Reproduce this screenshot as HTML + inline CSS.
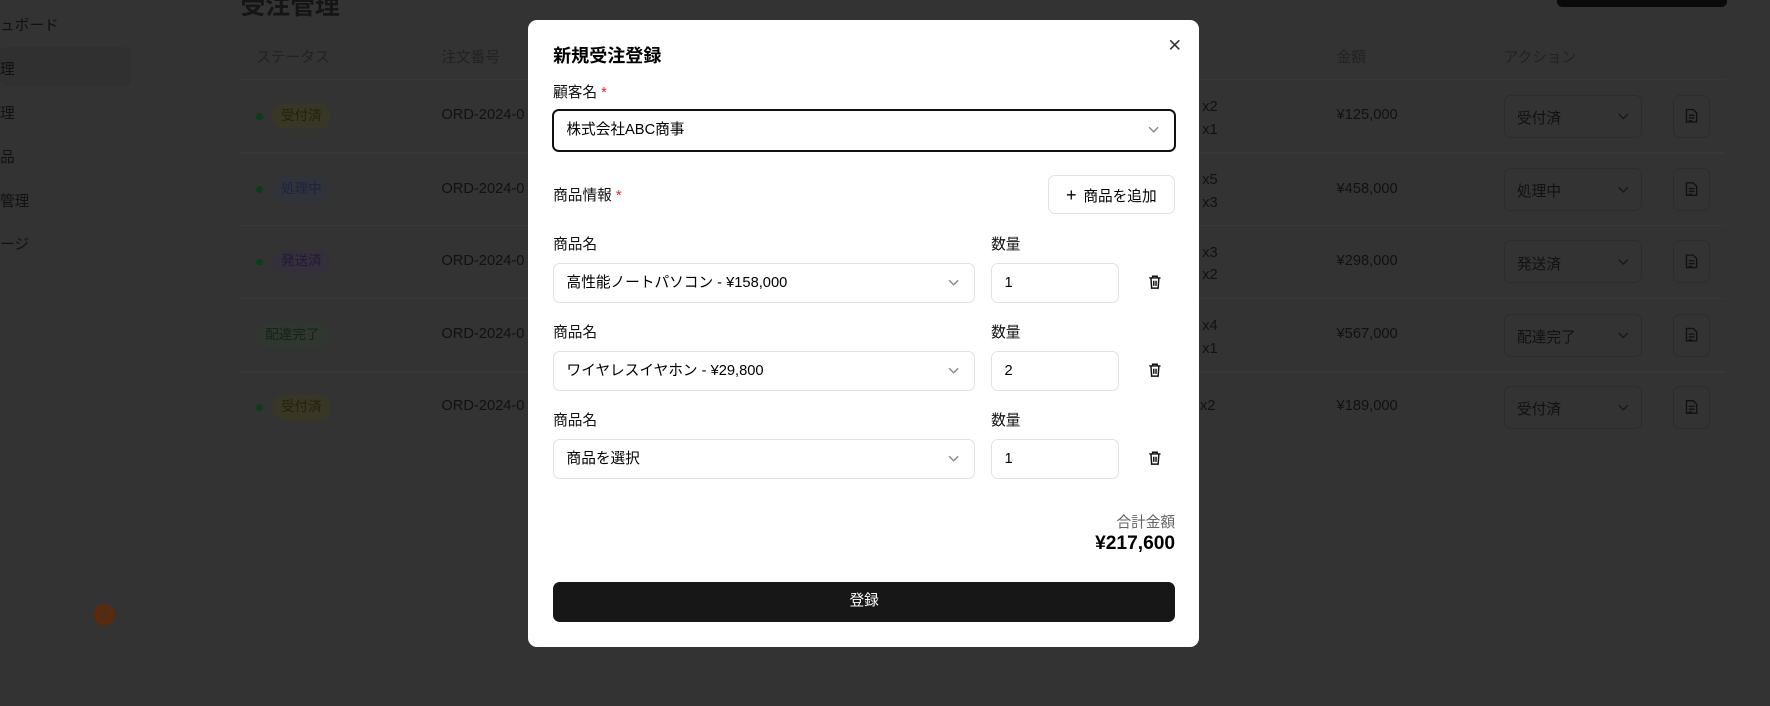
<!DOCTYPE html>
<html><head><meta charset="utf-8"><style>
html{zoom:1.12883}
body{margin:0;width:1568px;height:625px;background:#333;overflow:hidden;position:relative;font-family:"Liberation Sans","Noto Sans CJK JP",sans-serif;font-size:13px;color:#000}
.a{position:absolute;white-space:nowrap}
.dim{color:#111}
.hd{color:#222;font-size:13px}
.line{position:absolute;left:213px;width:1315px;height:1px;background:#383838}
.badge{position:absolute;height:22px;line-height:22px;padding:0 8px;border-radius:11px;font-size:12px}
.dot{position:absolute;width:6px;height:6px;border-radius:3px;background:#0b3d1a}
.asel{position:absolute;left:1332px;width:123px;height:38px;border:1px solid #2c2c2c;border-radius:6px;box-sizing:border-box}
.doc{position:absolute;left:1482px;width:33px;height:38px;border:1px solid #2c2c2c;border-radius:6px;box-sizing:border-box}
.modal{position:absolute;left:468px;top:18px;width:594px;height:555px;background:#fff;border-radius:8px}
.inp{position:absolute;border:1px solid #e2e2e2;border-radius:6px;box-sizing:border-box;background:#fff;font-size:13px;line-height:34px;padding-left:11px}
.lbl{position:absolute;font-size:13px;color:#111}
</style></head><body>
<div class="a" style="left:213px;top:-12px;font-size:22px;font-weight:bold;color:#151515">受注管理</div>
<div class="a" style="left:1379px;top:-10px;width:151px;height:16px;background:#0a0a0a;border-radius:5px"></div>
<div class="a dim" style="left:0;top:12px">ュボード</div>
<div class="a" style="left:0;top:42px;width:116px;height:34px;background:#303030;border-radius:6px"></div>
<div class="a dim" style="left:0;top:51px">理</div>
<div class="a dim" style="left:0;top:90px">理</div>
<div class="a dim" style="left:0;top:129px">品</div>
<div class="a dim" style="left:0;top:168px">管理</div>
<div class="a dim" style="left:0;top:206px">ージ</div>
<div class="a" style="left:83px;top:535px;width:19px;height:19px;border-radius:10px;background:#5a2a0a;color:#333;font-size:11px;text-align:center;line-height:19px">2</div>

<div class="a hd" style="left:227px;top:41px">ステータス</div>
<div class="a hd" style="left:391px;top:41px">注文番号</div>
<div class="a hd" style="left:1184px;top:41px">金額</div>
<div class="a hd" style="left:1332px;top:41px">アクション</div>
<div class="line" style="top:70px"></div><div class="line" style="top:135px"></div><div class="line" style="top:199px"></div><div class="line" style="top:264px"></div><div class="line" style="top:329px"></div>

<div class="dot" style="left:227px;top:100px"></div><div class="badge" style="left:241px;top:92px;background:#383624;color:#262208">受付済</div>
<div class="dot" style="left:227px;top:165px"></div><div class="badge" style="left:241px;top:157px;background:#31333a;color:#1c2440">処理中</div>
<div class="dot" style="left:227px;top:229px"></div><div class="badge" style="left:241px;top:221px;background:#343039;color:#24183a">発送済</div>
<div class="badge" style="left:227px;top:286px;background:#303630;color:#122418">配達完了</div>
<div class="dot" style="left:227px;top:358px"></div><div class="badge" style="left:241px;top:350px;background:#383624;color:#262208">受付済</div>

<div class="a dim" style="left:391px;top:95px">ORD-2024-0</div>
<div class="a dim" style="left:391px;top:160px">ORD-2024-0</div>
<div class="a dim" style="left:391px;top:224px">ORD-2024-0</div>
<div class="a dim" style="left:391px;top:289px">ORD-2024-0</div>
<div class="a dim" style="left:391px;top:353px">ORD-2024-0</div>
<div class="a dim" style="left:1065px;top:85px;line-height:20px">x2<br>x1</div>
<div class="a dim" style="left:1065px;top:150px;line-height:20px">x5<br>x3</div>
<div class="a dim" style="left:1065px;top:214px;line-height:20px">x3<br>x2</div>
<div class="a dim" style="left:1065px;top:279px;line-height:20px">x4<br>x1</div>
<div class="a dim" style="left:1063px;top:353px">x2</div>
<div class="a dim" style="left:1184px;top:95px">¥125,000</div>
<div class="a dim" style="left:1184px;top:160px">¥458,000</div>
<div class="a dim" style="left:1184px;top:224px">¥298,000</div>
<div class="a dim" style="left:1184px;top:289px">¥567,000</div>
<div class="a dim" style="left:1184px;top:353px">¥189,000</div>

<div class="asel" style="top:84px"><span class="a dim" style="left:11px;top:10px">受付済</span></div>
<div class="asel" style="top:149px"><span class="a dim" style="left:11px;top:10px">処理中</span></div>
<div class="asel" style="top:213px"><span class="a dim" style="left:11px;top:10px">発送済</span></div>
<div class="asel" style="top:278px"><span class="a dim" style="left:11px;top:10px">配達完了</span></div>
<div class="asel" style="top:342px"><span class="a dim" style="left:11px;top:10px">受付済</span></div>
<svg class="a" style="left:0;top:0" width="1568" height="625">
<g fill="none" stroke="#181818" stroke-width="1.2">
<path d="M1434 101l4 4 4-4M1434 166l4 4 4-4M1434 230l4 4 4-4M1434 295l4 4 4-4M1434 359l4 4 4-4"/>
<g id="d"><path d="M1494 97h6l3 3v8h-9z M1496 102h5M1496 104.5h5M1496 107h3" stroke="#111"/></g>
<use href="#d" y="65"/><use href="#d" y="129"/><use href="#d" y="194"/><use href="#d" y="258"/>
</g></svg>
<div class="doc" style="top:84px"></div><div class="doc" style="top:149px"></div><div class="doc" style="top:213px"></div><div class="doc" style="top:278px"></div><div class="doc" style="top:342px"></div>

<div class="modal"></div>
<div class="a" style="left:490px;top:37px;font-size:16px;font-weight:bold">新規受注登録</div>
<svg class="a" style="left:1035px;top:34px" width="12" height="12" viewBox="0 0 12 12"><path d="M2 2L10 10M10 2L2 10" stroke="#333" stroke-width="1.4"/></svg>
<div class="lbl" style="left:490px;top:72px">顧客名 <span style="color:#e22">*</span></div>
<div class="inp" style="left:489px;top:97px;width:553px;height:38px;border:2px solid #111;line-height:35px">株式会社ABC商事</div>
<svg class="a" style="left:1017px;top:111px" width="10" height="8"><path d="M1 2l4 4 4-4" fill="none" stroke="#888" stroke-width="1.2"/></svg>
<div class="lbl" style="left:490px;top:163px">商品情報 <span style="color:#e22">*</span></div>
<div class="inp" style="left:928px;top:155px;width:113px;height:35px;padding-left:0;text-align:center"><span style="font-size:16px;margin-right:6px">+</span>商品を追加</div>

<div class="lbl" style="left:490px;top:206px">商品名</div><div class="lbl" style="left:878px;top:206px">数量</div>
<div class="inp" style="left:490px;top:233px;width:374px;height:35px">高性能ノートパソコン - ¥158,000</div>
<div class="inp" style="left:878px;top:233px;width:113px;height:35px">1</div>
<div class="lbl" style="left:490px;top:284px">商品名</div><div class="lbl" style="left:878px;top:284px">数量</div>
<div class="inp" style="left:490px;top:311px;width:374px;height:35px">ワイヤレスイヤホン - ¥29,800</div>
<div class="inp" style="left:878px;top:311px;width:113px;height:35px">2</div>
<div class="lbl" style="left:490px;top:362px">商品名</div><div class="lbl" style="left:878px;top:362px">数量</div>
<div class="inp" style="left:490px;top:389px;width:374px;height:35px">商品を選択</div>
<div class="inp" style="left:878px;top:389px;width:113px;height:35px">1</div>
<svg class="a" style="left:840px;top:246px" width="10" height="8"><path d="M1 2l4 4 4-4" fill="none" stroke="#888" stroke-width="1.2"/></svg>
<svg class="a" style="left:840px;top:324px" width="10" height="8"><path d="M1 2l4 4 4-4" fill="none" stroke="#888" stroke-width="1.2"/></svg>
<svg class="a" style="left:840px;top:402px" width="10" height="8"><path d="M1 2l4 4 4-4" fill="none" stroke="#888" stroke-width="1.2"/></svg>
<svg class="a" style="left:1016px;top:243px" width="14" height="14" viewBox="0 0 14 14"><path d="M2 3.5h10M5 3.5V2h4v1.5M3.5 3.5l.6 9h5.8l.6-9M6 6v4.5M8 6v4.5" fill="none" stroke="#111" stroke-width="1.3"/></svg>
<svg class="a" style="left:1016px;top:321px" width="14" height="14" viewBox="0 0 14 14"><path d="M2 3.5h10M5 3.5V2h4v1.5M3.5 3.5l.6 9h5.8l.6-9M6 6v4.5M8 6v4.5" fill="none" stroke="#111" stroke-width="1.3"/></svg>
<svg class="a" style="left:1016px;top:399px" width="14" height="14" viewBox="0 0 14 14"><path d="M2 3.5h10M5 3.5V2h4v1.5M3.5 3.5l.6 9h5.8l.6-9M6 6v4.5M8 6v4.5" fill="none" stroke="#111" stroke-width="1.3"/></svg>

<div class="a" style="right:527px;top:453px;color:#666;font-size:13px">合計金額</div>
<div class="a" style="right:527px;top:472px;font-size:17px;font-weight:bold">¥217,600</div>
<div class="a" style="left:490px;top:516px;width:551px;height:35px;background:#171717;border-radius:6px;color:#fff;text-align:center;line-height:35px;font-size:13px">登録</div>
</body></html>
